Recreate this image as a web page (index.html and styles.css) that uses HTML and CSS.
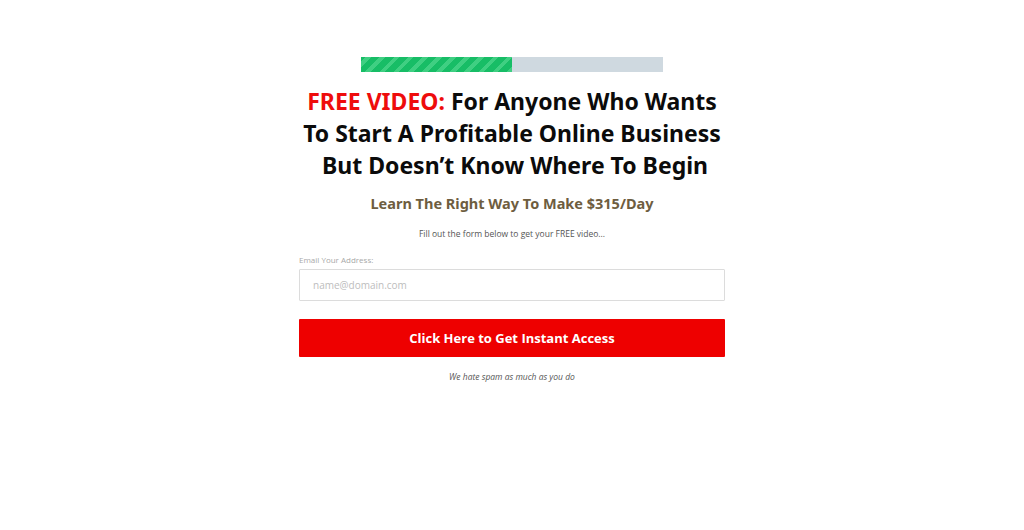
FILE: index.html
```html
<!DOCTYPE html>
<html lang="en">
<head>
<meta charset="utf-8">
<title>Free Video</title>
<link rel="stylesheet" href="styles.css">
</head>
<body>
<main class="page">
  <div class="progress"><div class="progress-fill" style="width:50%"></div></div>
  <h1 class="headline"><span class="accent">FREE VIDEO:</span> For Anyone Who Wants<br>To Start A Profitable Online Business<br>&nbsp;But Doesn’t Know Where To Begin</h1>
  <h2 class="subhead">Learn The Right Way To Make $315/Day</h2>
  <p class="intro">Fill out the form below to get your FREE video...</p>
  <form class="form">
    <label class="label" for="email">Email Your Address:</label>
    <input class="input" id="email" type="email" placeholder="name@domain.com">
    <button class="button" type="button">Click Here to Get Instant Access</button>
    <p class="note">We hate spam as much as you do</p>
  </form>
</main>
</body>
</html>
```
FILE: styles.css
```css
* { box-sizing: border-box; }
html, body { margin: 0; padding: 0; background: #fff; }
body { font-family: "Open Sans", "Noto Sans", sans-serif; color: #000; }
.page {
  width: 426px;
  margin: 0 auto;
  padding-top: 57px;
  display: flex;
  flex-direction: column;
  align-items: center;
}
.progress {
  width: 302px;
  height: 15px;
  background: #cfd9e0;
}
.progress-fill {
  height: 100%;
  background-color: #1fc36f;
  background-image: repeating-linear-gradient(-45deg, #3fcf82 0 4px, #17bd66 4px 10px);
}
.headline {
  margin: 13px 0 0;
  width: 560px;
  text-align: center;
  font-family: "Noto Sans", sans-serif;
  font-weight: 700;
  font-size: 23px;
  line-height: 32px;
  color: #0b0b0b;
}
.accent { color: #ee0c0c; }
.subhead {
  margin: 12px 0 0;
  font-family: "Noto Sans", sans-serif;
  font-weight: 700;
  font-size: 14.5px;
  line-height: 20px;
  color: #6e5d40;
}
.intro {
  margin: 15px 0 0;
  font-size: 8.5px;
  line-height: 12px;
  color: #555;
}
.form {
  width: 100%;
  display: flex;
  flex-direction: column;
  margin-top: 14px;
}
.label {
  font-size: 8px;
  line-height: 12px;
  color: #a8a8a8;
}
.input {
  margin-top: 3px;
  height: 32px;
  border: 1px solid #dcdcdc;
  border-radius: 1px;
  padding: 0 13px;
  font-family: "Open Sans", sans-serif;
  font-size: 10px;
  color: #333;
  outline: none;
}
.input::placeholder { color: #bdbdbd; }
.button {
  margin-top: 18px;
  height: 38px;
  border: none;
  border-radius: 1px;
  background: #ee0000;
  color: #fff;
  font-family: "Open Sans", sans-serif;
  font-weight: 700;
  font-size: 13px;
  cursor: pointer;
}
.note {
  margin: 14px 0 0;
  text-align: center;
  font-style: italic;
  font-size: 8.5px;
  line-height: 12px;
  color: #555;
}
```
